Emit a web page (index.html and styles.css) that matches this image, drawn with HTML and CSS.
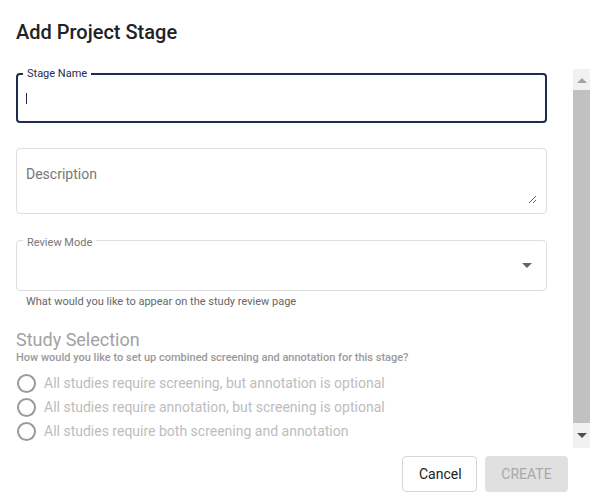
FILE: index.html
```html
<!DOCTYPE html>
<html lang="en">
<head>
<meta charset="utf-8">
<title>Add Project Stage</title>
<link rel="stylesheet" href="styles.css">
</head>
<body>
<div class="dialog">
  <h2 class="dialog-title">Add Project Stage</h2>
  <div class="dialog-body">
    <div class="dialog-content">
      <div class="field field-focused">
        <span class="field-label">Stage Name</span>
        <input class="field-input" type="text" aria-label="Stage Name">
        <span class="caret"></span>
      </div>
      <div class="field field-multiline">
        <textarea class="field-textarea" placeholder="Description" aria-label="Description"></textarea>
      </div>
      <div class="field field-select">
        <span class="field-label label-muted">Review Mode</span>
        <span class="select-arrow"></span>
      </div>
      <p class="helper">What would you like to appear on the study review page</p>

      <h3 class="section-title">Study Selection</h3>
      <p class="section-sub">How would you like to set up combined screening and annotation for this stage?</p>
      <div class="radio-group">
        <label class="radio-row"><input type="radio" name="sel" class="radio" disabled><span>All studies require screening, but annotation is optional</span></label>
        <label class="radio-row"><input type="radio" name="sel" class="radio" disabled><span>All studies require annotation, but screening is optional</span></label>
        <label class="radio-row"><input type="radio" name="sel" class="radio" disabled><span>All studies require both screening and annotation</span></label>
      </div>
    </div>
    <div class="scrollbar" aria-hidden="true">
      <span class="sb-btn sb-up"><span class="sb-arrow-up"></span></span>
      <span class="sb-thumb"></span>
      <span class="sb-btn sb-down"><span class="sb-arrow-down"></span></span>
    </div>
  </div>
  <div class="dialog-actions">
    <button class="btn btn-outline">Cancel</button>
    <button class="btn btn-disabled" disabled>Create</button>
  </div>
</div>
</body>
</html>
```

FILE: styles.css
```css
* { box-sizing: border-box; }
html, body { margin: 0; padding: 0; background: #fff; }
body { font-family: Roboto, "Noto Sans", Arial, sans-serif; color: #222; }

.dialog {
  width: 590px;
  height: 492px;
  display: flex;
  flex-direction: column;
}

.dialog-title {
  margin: 0;
  padding: 16px 16px 0;
  font-size: 20px;
  font-weight: 500;
  line-height: 32px;
  color: #222;
}

.dialog-body {
  margin-top: 18px;
  flex: 1;
  min-height: 0;
  display: flex;
}

.dialog-content {
  flex: 1;
  min-width: 0;
  overflow-y: auto;
  scrollbar-width: none;
  padding: 7px 26px 7px 16px;
}

/* scrollbar drawn beside the scroll area */
.scrollbar {
  width: 17px;
  margin-top: 3px;
  display: flex;
  flex-direction: column;
  background: #f1f1f1;
}

.sb-btn {
  display: flex;
  justify-content: center;
}
.sb-up { height: 21px; padding-top: 9px; }
.sb-down { height: 25px; padding-top: 10px; }

.sb-arrow-up {
  width: 0;
  height: 0;
  border-left: 5px solid transparent;
  border-right: 5px solid transparent;
  border-bottom: 5px solid #a3a3a3;
}
.sb-arrow-down {
  width: 0;
  height: 0;
  border-left: 5px solid transparent;
  border-right: 5px solid transparent;
  border-top: 5px solid #505050;
}

.sb-thumb {
  flex: 1;
  background: #c1c1c1;
}

.field {
  position: relative;
  border: 1px solid #dedede;
  border-radius: 4px;
  height: 51px;
  display: flex;
  align-items: center;
  padding: 0 9px;
}

.field-focused {
  border: 2px solid #1f2c4c;
  height: 50px;
  padding: 0 8px;
}

.field-label {
  position: absolute;
  top: -8px;
  left: 5px;
  padding: 0 4px;
  background: #fff;
  font-size: 11px;
  line-height: 13px;
  color: #1f2c4c;
}
.field-select .field-label { left: 6px; top: -5px; }
.label-muted { color: #777; }

.field-input {
  border: none;
  outline: none;
  width: 100%;
  font: 14px Roboto, sans-serif;
  padding: 0;
  caret-color: transparent;
  background: transparent;
}

.caret {
  position: absolute;
  left: 8px;
  top: 18px;
  width: 1px;
  height: 11px;
  background: #1f2c4c;
}

.field-multiline {
  margin-top: 25px;
  height: 66px;
  align-items: flex-start;
  padding: 15px 9px 9px 9px;
}

.field-textarea {
  border: none;
  outline: none;
  width: 100%;
  height: 40px;
  padding: 0;
  font: 14px/20px Roboto, sans-serif;
  color: #222;
  resize: both;
  background: transparent;
}
.field-textarea::placeholder { color: #777; }

.field-select {
  margin-top: 26px;
  justify-content: flex-end;
  padding-right: 14px;
}

.select-arrow {
  width: 0;
  height: 0;
  border-left: 5px solid transparent;
  border-right: 5px solid transparent;
  border-top: 5px solid #666;
}

.helper {
  margin: 4px 0 0 10px;
  font-size: 11px;
  line-height: 14px;
  color: #666;
}

.section-title {
  margin: 20px 0 0;
  font-size: 18px;
  font-weight: 400;
  line-height: 22px;
  color: #a2a2a2;
}

.section-sub {
  margin: 0;
  font-size: 11px;
  font-weight: 500;
  line-height: 14px;
  color: #9a9a9a;
}

.radio-group {
  margin-top: 6px;
  display: flex;
  flex-direction: column;
}

.radio-row {
  display: flex;
  align-items: center;
  height: 24px;
  font-size: 14px;
  color: #bdbdbd;
}

.radio {
  appearance: none;
  -webkit-appearance: none;
  margin: 0 8px 0 1px;
  width: 19px;
  height: 19px;
  border: 2px solid #9a9a9a;
  border-radius: 50%;
  background: #fff;
}

.dialog-actions {
  display: flex;
  justify-content: flex-end;
  gap: 8px;
  padding: 8px 22px 0 0;
  height: 44px;
}

.btn {
  height: 36px;
  border-radius: 4px;
  font: 14px Roboto, sans-serif;
  padding: 0 16px;
}

.btn-outline {
  width: 75px;
  background: #fff;
  border: 1px solid #d6d6d6;
  color: #222;
}

.btn-disabled {
  width: 83px;
  background: #e0e0e0;
  border: none;
  color: #a8a8a8;
  text-transform: uppercase;
}
```
